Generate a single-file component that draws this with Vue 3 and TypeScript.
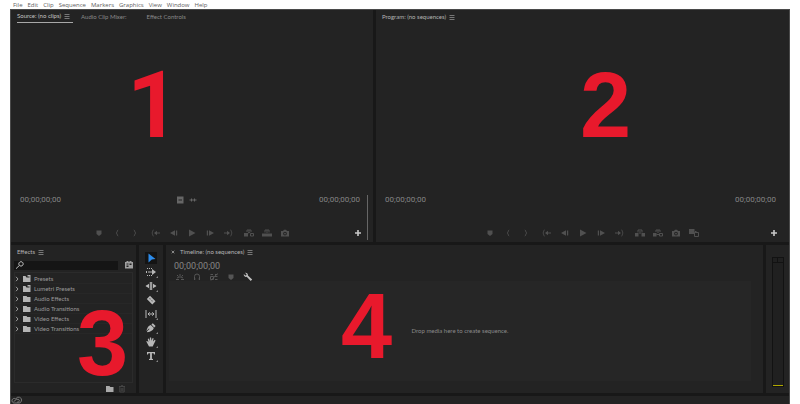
<script setup lang="ts">
import { defineComponent, h } from 'vue'

interface Glyph {
  fill?: string
  line?: string
}

// Every glyph is drawn on a 12 x 12 grid.
const glyphs: Record<string, Glyph> = {
  menu: { line: 'M3.500 4.500h5M3.500 6.500h5M3.500 8.500h5' },
  marker: { fill: 'M3.5 3.5h5V7L6 9 3.5 7z' },
  braceIn: { line: 'M7.200 3C6 3 6.600 5.600 5.200 6 6.600 6.400 6 9 7.200 9' },
  braceOut: { line: 'M4.800 3C6 3 5.400 5.600 6.800 6 5.400 6.400 6 9 4.800 9' },
  goIn: { line: 'M3.500 3C2.300 3 3 5.600 1.800 6 3 6.400 2.300 9 3.500 9M5 6h5', fill: 'M4 6l3-2.300v4.600z' },
  stepBack: { fill: 'M2 6l5-2.800v5.600zM8 3.500h1.200v5H8z' },
  play: { fill: 'M3 2.500L9.500 6 3 9.500z' },
  stepForward: { fill: 'M10 6L5 3.200v5.600zM2.800 3.500H4v5H2.800z' },
  goOut: { line: 'M8.500 3C9.700 3 9 5.600 10.200 6 9 6.400 9.700 9 8.500 9M2 6h5', fill: 'M8 6L5 3.700v4.600z' },
  insert: { fill: 'M1 6h4v3.500H1z', line: 'M4 5V3h4v2M6 3v3M4.800 5L6 6.200 7.200 5M7.500 6.500h3v2.500h-3z' },
  overwrite: { fill: 'M1 6.500h10v3H1z', line: 'M4 5.500V3h4v2.500M6 3v3' },
  lift: { fill: 'M1 6h3.500v3.500H1zM7.500 6H11v3.500H7.500z', line: 'M4 5.500V3h4v2.500M6 7V4' },
  extract: { fill: 'M1 6h3.500v3.500H1z', line: 'M4 5V3h4v2M6 3v3M4.500 7.500h3M7.500 6.500h3v2.500h-3z' },
  camera: { fill: 'M2 4h2l1-1.300h2L8 4h2v5.500H2zM6 4.700a1.900 1.900 0 1 0 0 3.800 1.900 1.900 0 0 0 0-3.800zM6 5.700a.9.9 0 1 1 0 1.800.9.9 0 0 1 0-1.800z' },
  compare: { fill: 'M1 2h5.500v5H1z', line: 'M7 4.500h1.500M6.500 5.500h4v4h-4z' },
  plus: { fill: 'M5.200 3h1.600v2.200H9v1.600H6.800V9H5.200V6.800H3V5.200h2.200z' },
  film: { fill: 'M3 2.500h6.500v7H3zM4.500 5.500v1H8v-1z' },
  wave: { line: 'M2.500 6h7M4.500 4.500v3M7.500 4.500v3' },
  search: { line: 'M7 2.700a2.200 2.200 0 1 1-.01 0M5.300 6.500L2 9.700' },
  fxBadge: { fill: 'M2 3h1.500V2h2v1h1V2h2v1H10v6.500H2zM3.500 4.500v1h2v-1zM3.500 6.500v1.500h2V6.500zM6.500 4.500v1.500h2V4.500z' },
  chevron: { line: 'M5 3.800L7 6 5 8.200' },
  folder: { fill: 'M2 3h3.500l.8 1H9.500v5H2z' },
  preset: { fill: 'M2 3h2.500l1 1.500H9.500V9H2zM6.500 2h3v2.500H8.500V3.500h-2z' },
  trash: { line: 'M3 3.500h6M5 2.700h2M3.800 4v5h4.400V4M5.200 5v3M6.800 5v3' },
  select: { fill: 'M3.500 1.500L10.500 7l-3.700.6L3.500 10.500z' },
  track: { fill: 'M7 3L11 6 7 9z', line: 'M2 2.500h1M4 2.500h1M6 2.500h1M1.500 5v2M3 6h4M2 9.500h1M4 9.500h1M6 9.500h1' },
  ripple: { line: 'M5.300 2v8M6.700 2v8M1.500 6H4M8 6h2.500', fill: 'M.5 6L4 3.700v4.600zM11.500 6L8 3.700v4.600z' },
  razor: { fill: 'M1.800 5L5 1.800 10.500 7.300 7.300 10.500zM4.300 4.800l.8.8.6-.6-.8-.8zM6.300 6.800l.8.8.6-.6-.8-.8z' },
  slip: { line: 'M1 2v8M11 2v8M3 6h6M4.700 4.300L3 6l1.700 1.700M7.300 4.300L9 6 7.300 7.700' },
  pen: { fill: 'M7.800 1.200L10.600 4 9.200 5.400 6.400 2.600zM5.800 3l3 3C8.200 8.500 5.500 9.700 2.500 10.200l-.6-.6 2.600-2.600-.5-.5-2.600 2.600C2 6 3.500 3.600 5.800 3z' },
  hand: { fill: 'M1.200 5.300l1-.3 1.200 1.200L2.800 3l1-.4 1 2.400.1-3.500h1.200l.4 3.200L7.600 2l1 .3L8 5.500l1.700-1.700.9.600L8.500 8.800 7.700 10.500H4z' },
  text: { fill: 'M2 2h8v2.500H9l-.4-1.200H6.900v5.400l1.100.3v1H4v-1l1.100-.3V3.300H3.400L3 4.500H2z' },
  close: { line: 'M4.700 4.700l2.600 2.600M7.300 4.700L4.700 7.300' },
  nest: { line: 'M2 8.500h3M7 8.500h3M6 3v2M3 4l1.500 1.500M9 4L7.500 5.500M3 7l2-1h2l2 1' },
  magnet: { line: 'M3.500 9V5.500a2.500 2.500 0 0 1 5 0V9M3 8h1.500M7.500 8H9' },
  linked: { line: 'M2.500 3.500H5M7 3.500h2.500M2.500 5.500h3v3h-3zM7 5.500h2.500M7 8.500h2.500M9.500 2.500L3 9.500' },
  wrench: { fill: 'M3 1.800l1.500 1.500-.2 1-1 .2L1.800 3C1.500 5 3 6.200 4.700 5.800l4 4.200 1.500-1.400-4.300-4C6.200 2.800 4.800 1.500 3 1.800z' },
  cloud: { line: 'M4.200 9a2.300 2.300 0 1 1 1.600-4 3 3 0 1 1 2 4zM3.500 7.800L7 4.800M7 8a1.500 1.500 0 1 0 0-2.500' },
}

const Icon = defineComponent({
  props: { name: { type: String, required: true } },
  setup(props) {
    return () => {
      const g = glyphs[props.name]
      return h('svg', { width: 12, height: 12, viewBox: '0 0 12 12', 'aria-hidden': 'true', class: 'icon' }, [
        g.fill ? h('path', { d: g.fill, fill: 'currentColor', 'fill-rule': 'evenodd' }) : null,
        g.line ? h('path', { d: g.line, fill: 'none', stroke: 'currentColor' }) : null,
      ])
    }
  },
})

const menus = ['File', 'Edit', 'Clip', 'Sequence', 'Markers', 'Graphics', 'View', 'Window', 'Help']

const navigation = [
  ['marker', 'braceIn', 'braceOut'],
  ['goIn', 'stepBack', 'play', 'stepForward', 'goOut'],
]
const sourceTransport = [...navigation, ['insert', 'overwrite', 'camera']]
const programTransport = [...navigation, ['lift', 'extract', 'camera', 'compare']]

const effects = [
  { label: 'Presets', icon: 'preset' },
  { label: 'Lumetri Presets', icon: 'preset' },
  { label: 'Audio Effects', icon: 'folder' },
  { label: 'Audio Transitions', icon: 'folder' },
  { label: 'Video Effects', icon: 'folder' },
  { label: 'Video Transitions', icon: 'folder' },
]

const tools = [
  { icon: 'select', more: false },
  { icon: 'track', more: true },
  { icon: 'ripple', more: true },
  { icon: 'razor', more: false },
  { icon: 'slip', more: true },
  { icon: 'pen', more: true },
  { icon: 'hand', more: true },
  { icon: 'text', more: true },
]

const timelineOptions = ['nest', 'magnet', 'linked', 'marker', 'wrench']
</script>

<template>
  <div class="page">
    <nav class="menubar">
      <button v-for="m in menus" :key="m" type="button">{{ m }}</button>
    </nav>

    <div class="workspace">
      <div class="row monitors">
        <section class="panel monitor source">
          <header class="tabs">
            <button type="button" class="tab active">Source: (no clips)<Icon name="menu" /></button>
            <button type="button" class="tab mixer">Audio Clip Mixer:</button>
            <button type="button" class="tab">Effect Controls</button>
          </header>
          <div class="screen"></div>
          <div class="times">
            <span>00;00;00;00</span>
            <div class="media">
              <button type="button" aria-label="film"><Icon name="film" /></button>
              <button type="button" aria-label="wave"><Icon name="wave" /></button>
            </div>
            <span>00;00;00;00</span>
          </div>
          <div class="transport">
            <div v-for="(group, i) in sourceTransport" :key="i" class="group">
              <button v-for="b in group" :key="b" type="button" :aria-label="b"><Icon :name="b" /></button>
            </div>
            <button type="button" class="add" aria-label="plus"><Icon name="plus" /></button>
          </div>
          <i class="scroll"></i>
          <b class="number one">1</b>
        </section>

        <section class="panel monitor program">
          <header class="tabs">
            <button type="button" class="tab">Program: (no sequences)<Icon name="menu" /></button>
          </header>
          <div class="screen"></div>
          <div class="times">
            <span>00;00;00;00</span>
            <span>00;00;00;00</span>
          </div>
          <div class="transport">
            <div v-for="(group, i) in programTransport" :key="i" class="group">
              <button v-for="b in group" :key="b" type="button" :aria-label="b"><Icon :name="b" /></button>
            </div>
            <button type="button" class="add" aria-label="plus"><Icon name="plus" /></button>
          </div>
          <b class="number two">2</b>
        </section>
      </div>

      <div class="row editing">
        <section class="panel effects">
          <header class="tabs">
            <button type="button" class="tab">Effects<Icon name="menu" /></button>
          </header>
          <div class="find">
            <label class="field">
              <Icon name="search" />
              <input type="text" aria-label="search" />
            </label>
            <button type="button" aria-label="fx"><Icon name="fxBadge" /></button>
          </div>
          <ul class="tree">
            <li v-for="e in effects" :key="e.label">
              <button type="button">
                <Icon name="chevron" class="chevron" /><Icon :name="e.icon" class="folder" /><span>{{ e.label }}</span>
              </button>
            </li>
          </ul>
          <footer class="bin">
            <button type="button" aria-label="folder"><Icon name="folder" /></button>
            <button type="button" class="dim" aria-label="trash"><Icon name="trash" /></button>
          </footer>
          <b class="number three">3</b>
        </section>

        <section class="panel toolbox">
          <div class="tools">
            <button v-for="t in tools" :key="t.icon" type="button" :class="{ on: t.icon === 'select', more: t.more }" :aria-label="t.icon">
              <Icon :name="t.icon" />
            </button>
          </div>
        </section>

        <section class="panel timeline">
          <header class="tabs">
            <button type="button" class="close" aria-label="close"><Icon name="close" /></button>
            <button type="button" class="tab">Timeline: (no sequences)<Icon name="menu" /></button>
          </header>
          <div class="playhead">00;00;00;00</div>
          <div class="options">
            <button v-for="o in timelineOptions" :key="o" type="button" :class="o" :aria-label="o"><Icon :name="o" /></button>
          </div>
          <div class="drop">Drop media here to create sequence.</div>
          <b class="number four">4</b>
        </section>

        <section class="panel levels">
          <div class="meter"><i class="clip"></i><i class="floor"></i></div>
        </section>
      </div>

      <footer class="status"><Icon name="cloud" /></footer>
    </div>
  </div>
</template>

<style>
body {
  background: #fff;
}
.icon {
  display: block;
  flex: none;
}
</style>

<style scoped>
.page {
  height: 100vh;
  box-sizing: border-box;
  padding: 0 10px;
  display: flex;
  flex-direction: column;
  font-family: Lato, sans-serif;
  font-size: 6px;
  line-height: 8px;
}
button {
  margin: 0;
  padding: 0;
  border: 0;
  background: none;
  color: inherit;
  font: inherit;
  text-align: left;
  white-space: nowrap;
}
.menubar {
  display: flex;
  gap: 5px;
  height: 9px;
  padding-left: 3px;
  font-family: "Open Sans", sans-serif;
  color: #606060;
}
.workspace {
  flex: 1;
  display: flex;
  flex-direction: column;
  gap: 3px;
  min-height: 0;
  box-sizing: border-box;
  border: 1px solid #4a4a4a;
  border-bottom: 0;
  background: #181818;
}
.row {
  display: grid;
  gap: 3px;
}
.monitors {
  flex: 232;
  grid-template-columns: 362fr 413fr;
}
.editing {
  flex: 148;
  grid-template-columns: 125px 24px 1fr 23px;
}
.panel {
  position: relative;
  display: flex;
  flex-direction: column;
  min-width: 0;
  background: #232323;
  color: #a0a0a0;
}
.tabs {
  display: flex;
  height: 13px;
  padding-left: 6px;
}
.tab {
  display: flex;
  align-items: center;
  height: 13px;
  color: #b4b4b4;
}
.tab .icon {
  color: #777;
}
.source .tab {
  color: #8a8a8a;
}
.source .tab.active {
  color: #c4c4c4;
  border-bottom: 1px solid #a8a8a8;
  margin-right: 8px;
}
.tab.mixer {
  margin-right: 20px;
}
.screen {
  flex: 1;
}
.times {
  display: flex;
  justify-content: space-between;
  align-items: center;
  height: 12px;
  padding: 0 13px 0 9px;
  margin-bottom: 21px;
  font-family: Roboto, sans-serif;
  font-size: 8px;
  color: #858585;
}
.media {
  display: flex;
  gap: 1px;
  padding-right: 7px;
  color: #666;
}
.transport {
  position: relative;
  display: flex;
  justify-content: center;
  gap: 9px;
  height: 12px;
  margin-bottom: 3px;
  color: #505050;
}
.program .transport {
  padding-left: 18px;
}
.group {
  display: flex;
  gap: 6px;
}
.add {
  position: absolute;
  right: 9px;
  color: #c8c8c8;
}
.scroll {
  position: absolute;
  right: 5px;
  bottom: 2px;
  width: 1px;
  height: 45px;
  background: #666;
}
.number {
  position: absolute;
  font: bold 92px/92px "Liberation Sans", sans-serif;
  color: #e8192c;
  pointer-events: none;
}
.number.one {
  left: 116px;
  top: 50px;
  font-family: Roboto, sans-serif;
}
.two { left: 204px; top: 49px; }
.three { left: 66px; top: 52px; }
.four { left: 175px; top: 35px; }
.effects {
  padding-right: 3px;
}
.find {
  display: flex;
  align-items: center;
  gap: 5px;
  height: 12px;
  margin: 1px -2px 0 3px;
}
.field {
  flex: 1;
  display: flex;
  align-items: center;
  height: 9px;
  min-width: 0;
  background: #151515;
  color: #bbb;
}
.field input {
  flex: 1;
  min-width: 0;
  height: 8px;
  padding: 0;
  border: 0;
  outline: 0;
  background: none;
  color: inherit;
  font: inherit;
}
.tree {
  flex: 1;
  margin: 1px 0 0 3px;
  padding: 1px 0 0;
  list-style: none;
  border: 1px solid #2b2b2b;
}
.tree li {
  height: 10px;
  box-sizing: border-box;
  border-bottom: 1px solid #272727;
}
.tree button {
  display: flex;
  align-items: center;
  height: 10px;
  color: #9a9a9a;
}
.tree .chevron {
  margin: 0 -2px 0 -4px;
}
.tree .folder {
  color: #b4b4b4;
  margin-right: 1px;
}
.bin {
  display: flex;
  justify-content: flex-end;
  height: 10px;
  padding-right: 5px;
  color: #aaa;
}
.bin .dim {
  color: #454545;
}
.tools {
  display: flex;
  flex-direction: column;
  align-items: center;
  gap: 2px;
  padding-top: 7px;
  color: #b8b8b8;
}
.tools button {
  position: relative;
  height: 12px;
}
.tools .on {
  background: #141414;
  color: #2d8ceb;
}
.tools .more::after {
  content: "";
  position: absolute;
  right: -1px;
  bottom: 0;
  border-left: 2px solid transparent;
  border-bottom: 2px solid #888;
}
.timeline .tabs {
  padding-left: 1px;
}
.close {
  width: 13px;
  color: #888;
}
.playhead {
  padding-left: 8px;
  margin-top: 3px;
  font-family: Roboto, sans-serif;
  font-size: 9px;
  line-height: 10px;
  color: #858585;
}
.options {
  display: flex;
  gap: 5px;
  height: 10px;
  padding-left: 8px;
  color: #555;
}
.options .wrench {
  color: #c0c0c0;
}
.drop {
  flex: 1;
  display: flex;
  align-items: center;
  justify-content: center;
  margin: 0 12px 12px 3px;
  background: #262626;
  color: #8a8a8a;
}
.levels {
  align-items: center;
  padding: 12px 0 6px;
}
.meter {
  flex: 1;
  width: 10px;
  display: flex;
  flex-direction: column;
  justify-content: space-between;
  border: 1px solid #121212;
  background: #202020;
}
.clip {
  height: 4px;
  border-bottom: 1px solid #121212;
  background: linear-gradient(90deg, transparent 4px, #121212 4px, #121212 5px, transparent 5px);
}
.floor {
  height: 1px;
  background: #b0a800;
}
.status {
  height: 8px;
  background: #232323;
  color: #777;
  overflow: hidden;
}
.status svg {
  margin: -2px 0 0 -1px;
}
</style>
